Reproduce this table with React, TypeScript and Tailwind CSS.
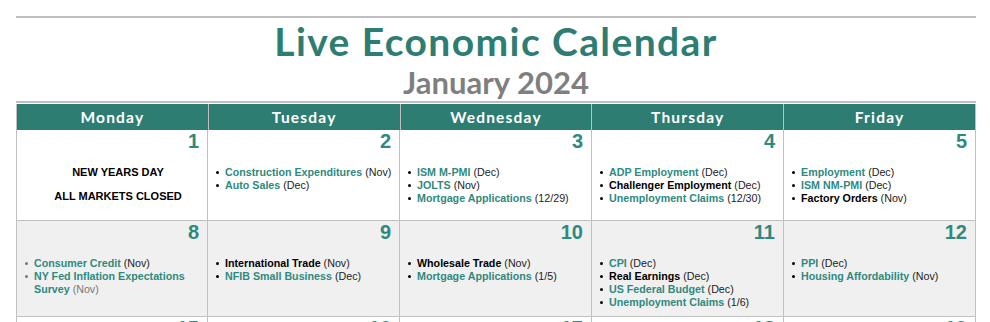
import React from "react";

type Item = { name: string; tail: string; black?: boolean; gray?: boolean; grayTail?: boolean };
type Cell = { n: number; holiday?: boolean; items?: Item[] };

const rows: { bg: string; h: string; cells: Cell[] }[] = [
  {
    bg: "bg-white",
    h: "h-[91px]",
    cells: [
      { n: 1, holiday: true },
      {
        n: 2,
        items: [
          { name: "Construction Expenditures", tail: "(Nov)" },
          { name: "Auto Sales", tail: "(Dec)" },
        ],
      },
      {
        n: 3,
        items: [
          { name: "ISM M-PMI", tail: "(Dec)" },
          { name: "JOLTS", tail: "(Nov)" },
          { name: "Mortgage Applications", tail: "(12/29)" },
        ],
      },
      {
        n: 4,
        items: [
          { name: "ADP Employment", tail: "(Dec)" },
          { name: "Challenger Employment", tail: "(Dec)", black: true },
          { name: "Unemployment Claims", tail: "(12/30)" },
        ],
      },
      {
        n: 5,
        items: [
          { name: "Employment", tail: "(Dec)" },
          { name: "ISM NM-PMI", tail: "(Dec)" },
          { name: "Factory Orders", tail: "(Nov)", black: true },
        ],
      },
    ],
  },
  {
    bg: "bg-[#f0f0f0]",
    h: "h-[96px]",
    cells: [
      {
        n: 8,
        items: [
          { name: "Consumer Credit", tail: "(Nov)", gray: true },
          { name: "NY Fed Inflation Expectations Survey", tail: "(Nov)", gray: true, grayTail: true },
        ],
      },
      {
        n: 9,
        items: [
          { name: "International Trade", tail: "(Nov)", black: true },
          { name: "NFIB Small Business", tail: "(Dec)" },
        ],
      },
      {
        n: 10,
        items: [
          { name: "Wholesale Trade", tail: "(Nov)", black: true },
          { name: "Mortgage Applications", tail: "(1/5)" },
        ],
      },
      {
        n: 11,
        items: [
          { name: "CPI", tail: "(Dec)" },
          { name: "Real Earnings", tail: "(Dec)", black: true },
          { name: "US Federal Budget", tail: "(Dec)" },
          { name: "Unemployment Claims", tail: "(1/6)" },
        ],
      },
      {
        n: 12,
        items: [
          { name: "PPI", tail: "(Dec)" },
          { name: "Housing Affordability", tail: "(Nov)" },
        ],
      },
    ],
  },
  {
    bg: "bg-white",
    h: "h-[91px]",
    cells: [{ n: 15 }, { n: 16 }, { n: 17 }, { n: 18 }, { n: 19 }],
  },
];

const days = ["Monday", "Tuesday", "Wednesday", "Thursday", "Friday"];

function DayCell({ cell, first }: { cell: Cell; first: boolean }) {
  return (
    <div
      className={`border-r border-b border-[#c0c0c0] ${first ? "border-l" : ""} pl-[8px] pr-[8px]`}
    >
      <div className="text-right text-[20px] leading-[22px] font-bold text-[#2e8a7f]">{cell.n}</div>
      {cell.holiday && (
        <div className="mt-[14px] pl-[12px] text-center text-[11px] leading-[13px] font-bold text-black">
          <div>NEW YEARS DAY</div>
          <div className="mt-[11px]">ALL MARKETS CLOSED</div>
        </div>
      )}
      {cell.items && (
        <ul className="mt-[14px] mr-[-5px] text-[10.7px] leading-[13px]">
          {cell.items.map((it, i) => (
            <li key={i} className="flex">
              <span className="w-[9px] h-[13px] shrink-0 flex items-center">
                <span
                  className={`block w-[3px] h-[3px] rounded-full ${it.gray ? "bg-[#777777]" : "bg-black"}`}
                />
              </span>
              <span>
                <span className={`font-bold ${it.black ? "text-black" : "text-[#2e8a7f]"}`}>{it.name}</span>{" "}
                <span className={it.grayTail ? "text-[#777777]" : "text-[#222222]"}>{it.tail}</span>
              </span>
            </li>
          ))}
        </ul>
      )}
    </div>
  );
}

export default function App() {
  return (
    <div className="w-[990px] h-[322px] overflow-hidden bg-white px-[16px] pt-[16px] [font-family:'Liberation_Sans',Arial,sans-serif]">
      <div className="w-[960px]">
        <div className="h-[2px] bg-[#c0c0c0]" />
        <div className="mt-[1px] text-center text-[39px] leading-[44px] font-bold tracking-[1.4px] text-[#2e7d72] [font-family:Lato,sans-serif]">
          Live Economic Calendar
        </div>
        <div className="mt-[2px] text-center text-[31px] leading-[34px] font-bold text-[#7f7f7f] [font-family:Lato,sans-serif]">
          January 2024
        </div>
        <div className="mt-[2px] h-[2px] bg-[#c0c0c0]" />
        <div className="mt-[1px] grid grid-cols-5 h-[26px] bg-[#2e7d72] border-l border-[#c0c0c0]">
          {days.map((d) => (
            <div
              key={d}
              className="border-r border-[#c0c0c0] text-center text-[15.5px] leading-[26px] font-bold tracking-[1.2px] text-white [font-family:Lato,sans-serif]"
            >
              {d}
            </div>
          ))}
        </div>
        {rows.map((r, ri) => (
          <div key={ri} className={`grid grid-cols-5 ${r.h} ${r.bg}`}>
            {r.cells.map((c, ci) => (
              <DayCell key={ci} cell={c} first={ci === 0} />
            ))}
          </div>
        ))}
      </div>
    </div>
  );
}
